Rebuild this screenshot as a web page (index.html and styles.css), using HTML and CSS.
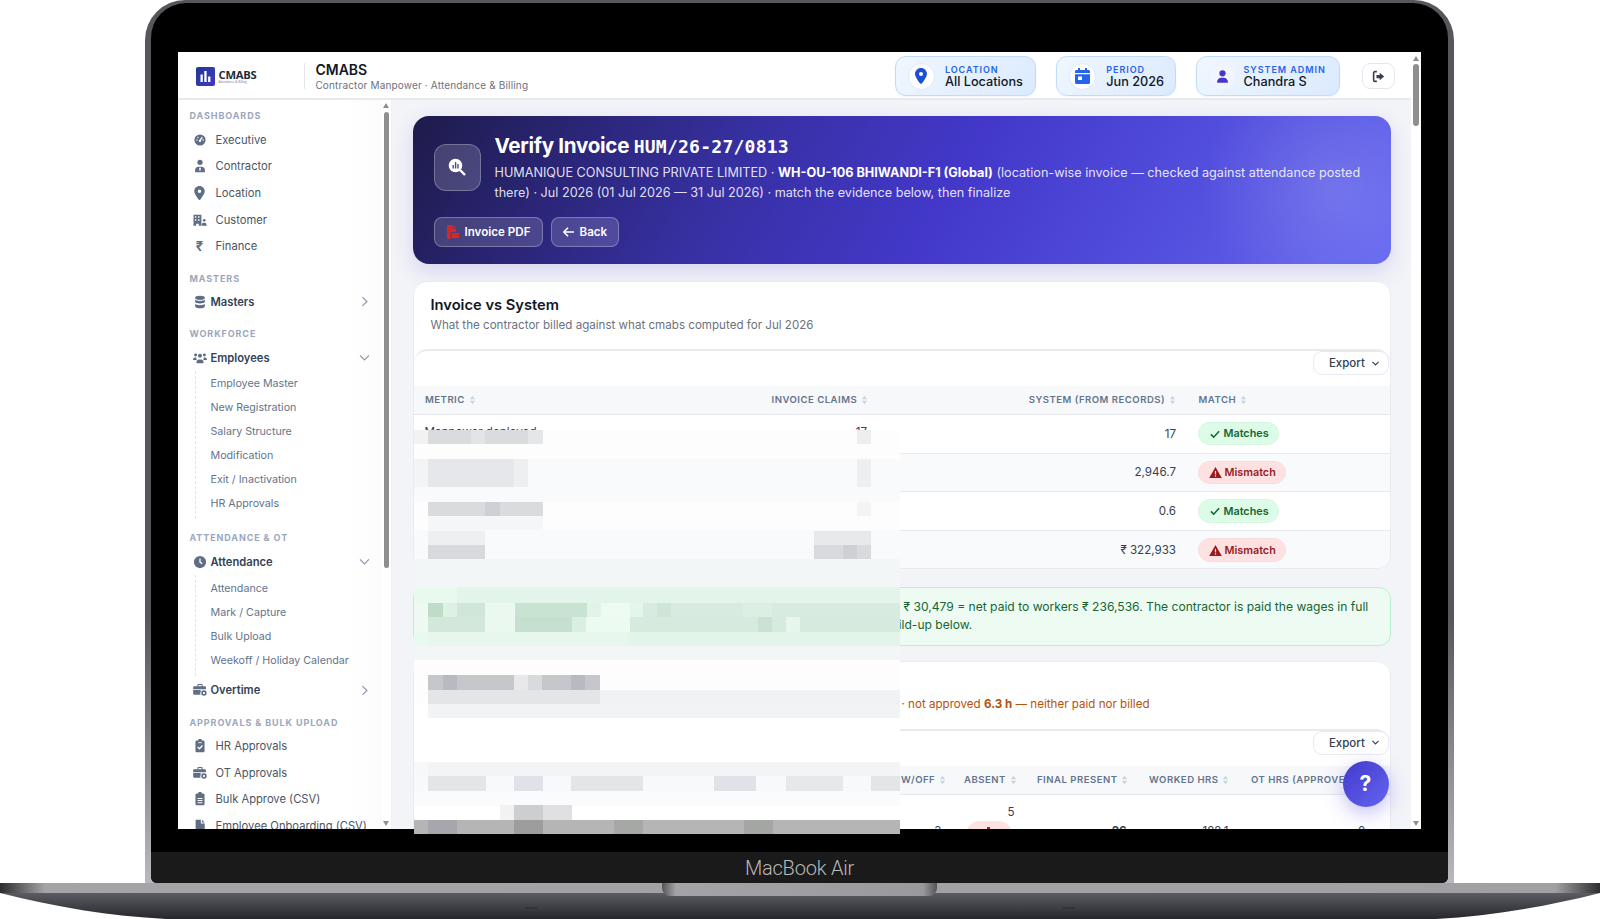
FILE: index.html
```html
<!DOCTYPE html>
<html>
<head>
	<meta charset="UTF-8">
	<title>CMABS</title>
	<link rel="stylesheet" href="styles.css">
</head>
<body>
<svg class="defs" width="0" height="0">
	<symbol id="i-gauge" viewBox="0 0 16 16"><circle cx="8" cy="8" r="6.4" fill="currentColor"/><path d="M8 8.6L10.6 4.6" stroke="#fff" stroke-width="1.5"/><circle cx="8" cy="9" r="1.3" fill="#fff"/><circle cx="4.5" cy="8" r=".8" fill="#fff"/><circle cx="5.6" cy="5" r=".8" fill="#fff"/><circle cx="11.6" cy="8" r=".8" fill="#fff"/></symbol>
	<symbol id="i-tie" viewBox="0 0 16 16"><circle cx="8" cy="3.8" r="3" fill="currentColor"/><path d="M2.4 15v-2.2a4 4 0 0 1 4-4h3.2a4 4 0 0 1 4 4V15z" fill="currentColor"/><path d="M8 9.4l1 1.2-.6 3h-.8l-.6-3z" fill="#fff"/></symbol>
	<symbol id="i-pin" viewBox="0 0 384 512"><path fill="currentColor" d="M215.7 499.2C267 435 384 279.4 384 192C384 86 298 0 192 0S0 86 0 192c0 87.4 117 243 168.3 307.2c12.3 15.3 35.1 15.3 47.4 0zM192 128a64 64 0 1 1 0 128 64 64 0 1 1 0-128z"/></symbol>
	<symbol id="i-building" viewBox="0 0 16 16"><path d="M.6 2h9v12.6h-3v-2.4h-3v2.4h-3z" fill="currentColor"/><path d="M2.2 3.8h1.6v1.6H2.2zM5.8 3.8h1.6v1.6H5.8zM2.2 7.2h1.6v1.6H2.2zM5.8 7.2h1.6v1.6H5.8z" fill="#fff"/><circle cx="12.8" cy="8.4" r="1.5" fill="currentColor"/><path d="M10 14.6v-1.2a2.2 2.2 0 0 1 2.2-2.2h1.2a2.2 2.2 0 0 1 2.2 2.2v1.2z" fill="currentColor"/></symbol>
	<symbol id="i-db" viewBox="0 0 16 16"><g fill="currentColor"><ellipse cx="8" cy="3.2" rx="5.6" ry="2.4"/><path d="M2.4 5.2C3.6 7.4 12.4 7.4 13.6 5.2V8C12.4 10.2 3.6 10.2 2.4 8z"/><path d="M2.4 10C3.6 12.2 12.4 12.2 13.6 10v2.8C13.6 14 11 15.2 8 15.2S2.4 14 2.4 12.8z"/></g></symbol>
	<symbol id="i-users" viewBox="0 0 16 16"><g fill="currentColor"><circle cx="3" cy="4.6" r="1.7"/><circle cx="13" cy="4.6" r="1.7"/><circle cx="8" cy="5.4" r="2.3"/><path d="M0 10a2.6 2.6 0 0 1 2.6-2.6H4a3 3 0 0 0 .4 3H0zM16 10a2.6 2.6 0 0 0-2.6-2.6H12a3 3 0 0 1-.4 3H16zM4 14v-1.2a3 3 0 0 1 3-3h2a3 3 0 0 1 3 3V14z"/></g></symbol>
	<symbol id="i-clock" viewBox="0 0 16 16"><circle cx="8" cy="8" r="7" fill="currentColor"/><path d="M8 4v4.2l2.6 1.7" fill="none" stroke="#fff" stroke-width="1.5"/></symbol>
	<symbol id="i-biztime" viewBox="0 0 16 16"><path d="M5 3.6V2.4C5 1.6 5.6 1 6.4 1h3.2c.8 0 1.4.6 1.4 1.4v1.2h2.4c.8 0 1.4.6 1.4 1.4v2H.2V5c0-.8.6-1.4 1.4-1.4zm1.2 0h3.6V2.2H6.2zM.2 8h8.4v1.2h1.6V8h1a4 4 0 0 0-2.600 5.400H1.600C.8 13.400.2 12.800.2 12z" fill="currentColor" fill-rule="evenodd"/><circle cx="12.500" cy="11.500" r="3.100" fill="currentColor"/><circle cx="12.500" cy="11.500" r="1.300" fill="#fff"/></symbol>
	<symbol id="i-clipcheck" viewBox="0 0 16 16"><path d="M6 1.600a2 2 0 0 1 4 0h1.600c.9 0 1.600.7 1.600 1.600v10.400c0 .9-.7 1.600-1.600 1.600H4.400c-.9 0-1.600-.7-1.600-1.600V3.200c0-.9.7-1.600 1.600-1.600z" fill="currentColor"/><path d="M5.400 9.200l2 2 3.400-3.800" fill="none" stroke="#fff" stroke-width="1.500"/><path d="M6 4.200h4" stroke="#fff" stroke-width="1"/></symbol>
	<symbol id="i-cliplist" viewBox="0 0 16 16"><path d="M6 1.600a2 2 0 0 1 4 0h1.600c.9 0 1.600.7 1.600 1.600v10.400c0 .9-.7 1.600-1.600 1.600H4.400c-.9 0-1.600-.7-1.600-1.600V3.200c0-.9.7-1.600 1.600-1.600z" fill="currentColor"/><path d="M5.200 7.400h5.600M5.200 9.800h5.600M5.200 12.200h5.600" stroke="#fff" stroke-width="1.200"/></symbol>
	<symbol id="i-file" viewBox="0 0 16 16"><path d="M3 .8h6v4.400h4.400V15.200H3z" fill="currentColor"/><path d="M10.200.8l3.200 3.200h-3.200z" fill="currentColor"/></symbol>
	<symbol id="i-right" viewBox="0 0 16 16"><path d="M5.500 2.500L11 8l-5.500 5.500" fill="none" stroke="currentColor" stroke-width="1.400"/></symbol>
	<symbol id="i-down" viewBox="0 0 16 16"><path d="M2.500 5.500L8 11l5.500-5.500" fill="none" stroke="currentColor" stroke-width="1.400"/></symbol>
	<symbol id="i-down2" viewBox="0 0 16 16"><path d="M2.500 5L8 10.500 13.500 5" fill="none" stroke="currentColor" stroke-width="2"/></symbol>
	<symbol id="i-sort" viewBox="0 0 8 12"><path d="M4 .8L7.200 5H.8zM4 11.200L.8 7h6.400z" fill="currentColor"/></symbol>
	<symbol id="i-check" viewBox="0 0 16 16"><path d="M2.500 8.500l3.700 3.700 7.300-8" fill="none" stroke="currentColor" stroke-width="2"/></symbol>
	<symbol id="i-warn" viewBox="0 0 16 16"><path d="M8 1.200L15.800 14.800H.2z" fill="currentColor"/><path d="M8 6v4.400" stroke="#fee2e2" stroke-width="1.500"/><circle cx="8" cy="12.300" r=".9" fill="#fee2e2"/></symbol>
</svg>

<div class="laptop">
	<div class="bezel">
		<div class="screen">
			<div class="app">
				<header class="topbar">
					<div class="logo">
						<span class="logo-mark">
							<svg width="11" height="11" viewBox="0 0 11 11"><path d="M.5 3.500h2.300V11H.5zM4.300 0h2.300v11H4.300zM8.100 5.500h2.300V11H8.100z" fill="#fff"/></svg>
						</span>
						<span class="logo-text">CMABS<small>Attendance &amp; Billing</small></span>
					</div>
					<div class="brand">
						<div class="brand-name">CMABS</div>
						<div class="brand-sub">Contractor Manpower · Attendance &amp; Billing</div>
					</div>
					<div class="pill pill-loc">
						<span class="pill-ico"><svg class="blue" width="12" height="16"><use href="#i-pin"/></svg></span>
						<span class="pill-txt"><b>LOCATION</b>All Locations</span>
					</div>
					<div class="pill pill-per">
						<span class="pill-ico">
							<svg width="15" height="16" viewBox="0 0 15 16"><path d="M3 0h2v2h5V0h2v2h1.500C14.300 2 15 2.700 15 3.500V5H0V3.500C0 2.700.7 2 1.500 2H3zM0 6.200h15v8.300c0 .8-.7 1.500-1.500 1.500h-12C.7 16 0 15.300 0 14.500z" fill="#2563eb"/><path d="M3 8.500h4v3.500H3z" fill="#fff"/></svg>
						</span>
						<span class="pill-txt"><b>PERIOD</b>Jun 2026</span>
					</div>
					<div class="pill pill-adm">
						<span class="pill-ico"><svg width="11" height="13" viewBox="0 0 448 512"><path fill="#4338ca" d="M224 256A128 128 0 1 0 224 0a128 128 0 1 0 0 256zm-45.700 48C79.800 304 0 383.800 0 482.300C0 498.700 13.300 512 29.700 512H418.300c16.400 0 29.700-13.300 29.700-29.700C448 383.800 368.200 304 269.700 304H178.300z"/></svg></span>
						<span class="pill-txt"><b>SYSTEM ADMIN</b>Chandra S</span>
					</div>
					<div class="logout">
						<svg width="13" height="13" viewBox="0 0 16 16"><path d="M6 2H3.500C2.700 2 2 2.700 2 3.500v9c0 .8.7 1.500 1.500 1.500H6" fill="none" stroke="#374151" stroke-width="2"/><path d="M9.500 3.500L15 8l-5.500 4.500V10H5.500V6h4z" fill="#374151"/></svg>
					</div>
				</header>
				<div class="body">
					<aside class="side">
						<nav class="nav">
							<div class="nav-label">DASHBOARDS</div>
							<a class="nav-item"><svg class="ico"><use href="#i-gauge"/></svg>Executive</a>
							<a class="nav-item"><svg class="ico"><use href="#i-tie"/></svg>Contractor</a>
							<a class="nav-item"><svg class="ico ico-pin"><use href="#i-pin"/></svg>Location</a>
							<a class="nav-item"><svg class="ico"><use href="#i-building"/></svg>Customer</a>
							<a class="nav-item"><span class="ico ico-rs">₹</span>Finance</a>

							<div class="nav-label">MASTERS</div>
							<a class="nav-group"><svg class="ico"><use href="#i-db"/></svg>Masters<svg class="chev"><use href="#i-right"/></svg></a>

							<div class="nav-label">WORKFORCE</div>
							<a class="nav-group"><svg class="ico"><use href="#i-users"/></svg>Employees<svg class="chev"><use href="#i-down"/></svg></a>
							<div class="sub">
								<a>Employee Master</a>
								<a>New Registration</a>
								<a>Salary Structure</a>
								<a>Modification</a>
								<a>Exit / Inactivation</a>
								<a>HR Approvals</a>
							</div>

							<div class="nav-label">ATTENDANCE &amp; OT</div>
							<a class="nav-group"><svg class="ico"><use href="#i-clock"/></svg>Attendance<svg class="chev"><use href="#i-down"/></svg></a>
							<div class="sub">
								<a>Attendance</a>
								<a>Mark / Capture</a>
								<a>Bulk Upload</a>
								<a>Weekoff / Holiday Calendar</a>
							</div>
							<a class="nav-group nav-ot"><svg class="ico"><use href="#i-biztime"/></svg>Overtime<svg class="chev"><use href="#i-right"/></svg></a>

							<div class="nav-label">APPROVALS &amp; BULK UPLOAD</div>
							<a class="nav-item"><svg class="ico"><use href="#i-clipcheck"/></svg>HR Approvals</a>
							<a class="nav-item"><svg class="ico"><use href="#i-biztime"/></svg>OT Approvals</a>
							<a class="nav-item"><svg class="ico"><use href="#i-cliplist"/></svg>Bulk Approve (CSV)</a>
							<a class="nav-item"><svg class="ico"><use href="#i-file"/></svg>Employee Onboarding (CSV)</a>
						</nav>
						<div class="sbar sbar-side"><i class="up"></i><span class="thumb"></span><i class="dn"></i></div>
					</aside>

					<main class="main">
						<section class="hero">
							<div class="hero-top">
								<span class="hero-ico">
									<svg width="18" height="18" viewBox="0 0 18 18"><circle cx="7.500" cy="7.500" r="6.800" fill="#fff"/><path d="M4.500 7h1.400v3.500H4.500zM6.900 4h1.400v6.500H6.900zM9.300 6h1.400v4.500H9.300z" fill="#4f4a8c"/><path d="M12 12l5 5" stroke="#fff" stroke-width="2.400"/></svg>
								</span>
								<div class="hero-txt">
									<h1>Verify Invoice <code>HUM/26-27/0813</code></h1>
									<p>HUMANIQUE CONSULTING PRIVATE LIMITED · <b>WH-OU-106 BHIWANDI-F1 (Global)</b> (location-wise invoice — checked against attendance posted there) · Jul 2026 (01 Jul 2026 — 31 Jul 2026) · match the evidence below, then finalize</p>
								</div>
							</div>
							<div class="hero-btns">
								<a class="hbtn">
									<svg width="13" height="14" viewBox="0 0 13 14"><path d="M1 0h5.500v3.500H10V7H4.500v7H1z" fill="#dc2626"/><path d="M7.300 0L10 2.700H7.300zM5.500 8H13v5H5.500z" fill="#dc2626"/></svg>
									Invoice PDF
								</a>
								<a class="hbtn">
									<svg width="11" height="10" viewBox="0 0 11 10"><path d="M5 .8L.9 5 5 9.200M1 5h10" fill="none" stroke="#fff" stroke-width="1.600"/></svg>
									Back
								</a>
							</div>
						</section>

						<section class="card">
							<div class="card-head">
								<h2>Invoice vs System</h2>
								<p>What the contractor billed against what cmabs computed for Jul 2026</p>
							</div>
							<div class="twrap">
								<div class="tbar"><a class="export">Export<svg width="9" height="9"><use href="#i-down2"/></svg></a></div>
								<table class="tbl tbl-a">
									<thead>
										<tr>
											<th class="left">METRIC <svg class="sort"><use href="#i-sort"/></svg></th>
											<th>INVOICE CLAIMS <svg class="sort"><use href="#i-sort"/></svg></th>
											<th>SYSTEM (FROM RECORDS) <svg class="sort"><use href="#i-sort"/></svg></th>
											<th class="left">MATCH <svg class="sort"><use href="#i-sort"/></svg></th>
										</tr>
									</thead>
									<tbody>
										<tr><td class="left first">Manpower deployed</td><td class="first">17</td><td>17</td><td class="left"><span class="badge ok"><svg width="12" height="12"><use href="#i-check"/></svg>Matches</span></td></tr>
										<tr><td></td><td></td><td>2,946.7</td><td class="left"><span class="badge bad"><svg width="13" height="13"><use href="#i-warn"/></svg>Mismatch</span></td></tr>
										<tr><td></td><td></td><td>0.6</td><td class="left"><span class="badge ok"><svg width="12" height="12"><use href="#i-check"/></svg>Matches</span></td></tr>
										<tr><td></td><td></td><td>₹ 322,933</td><td class="left"><span class="badge bad"><svg width="13" height="13"><use href="#i-warn"/></svg>Mismatch</span></td></tr>
									</tbody>
								</table>
							</div>
						</section>

						<div class="note">
							<div class="note-a">₹ 30,479 = net paid to workers ₹ 236,536. The contractor is paid the wages in full</div>
							<div class="note-b">build-up below.</div>
						</div>

						<section class="card card-b">
							<div class="card-head head-b">
								<p class="warn">· not approved <b>6.3 h</b> — neither paid nor billed</p>
							</div>
							<div class="twrap">
								<div class="tbar"><a class="export">Export<svg width="9" height="9"><use href="#i-down2"/></svg></a></div>
								<table class="tbl tbl-b">
									<thead>
										<tr>
											<th></th>
											<th>W/OFF <svg class="sort"><use href="#i-sort"/></svg></th>
											<th>ABSENT <svg class="sort"><use href="#i-sort"/></svg></th>
											<th>FINAL PRESENT <svg class="sort"><use href="#i-sort"/></svg></th>
											<th>WORKED HRS <svg class="sort"><use href="#i-sort"/></svg></th>
											<th class="left">OT HRS (APPROVED)</th>
										</tr>
									</thead>
									<tbody>
										<tr>
											<td></td>
											<td>3</td>
											<td class="absent">5<span class="dot"><i></i></span></td>
											<td><b>26</b></td>
											<td>182.1</td>
											<td class="ot">0</td>
										</tr>
									</tbody>
								</table>
							</div>
						</section>
					</main>
				</div>
			</div>
			<div class="sbar sbar-main"><i class="up"></i><span class="thumb"></span><i class="dn"></i></div>
		</div>
		<div class="chin">MacBook Air</div>
	</div>
</div>
<div class="base">
	<span class="base-dot dot-l"></span>
	<span class="base-dot dot-r"></span>
	<span class="notch"></span>
</div>

<a class="fab">?</a>

<!-- pixelated blur block laid over the middle of the page -->
<svg class="mosaic" width="486" height="404" viewBox="0 0 486 404">
	<rect width="486" height="29" fill="#fdfdfe"/>
	<rect y="29" width="486" height="14" fill="#f9fafb"/>
	<rect y="43" width="486" height="29" fill="#f9fafb"/>
	<rect y="72" width="486" height="29" fill="#fdfdfe"/>
	<rect y="86" width="486" height="14" fill="#fdfdfe"/>
	<rect y="100" width="486" height="36" fill="#f9fafb"/>
	<rect y="129" width="486" height="28" fill="#f3f6f7"/>
	<rect y="157" width="486" height="59" fill="#e8f9ee"/>
	<rect y="216" width="486" height="15" fill="#f2f6f7"/>
	<rect y="230" width="486" height="90" fill="#fdfdfe"/>
	<rect y="274" width="486" height="58" fill="#ffffff"/>
	<rect y="332" width="486" height="15" fill="#f7f8f9"/>
	<rect y="346" width="486" height="15" fill="#f8f9fb"/>
	<rect y="361" width="486" height="15" fill="#fafbfc"/>
	<rect y="376" width="486" height="14" fill="#ffffff"/>

	<!-- table rows -->
	<rect y="0" width="14" height="14" fill="#f2f2f3"/>
	<rect x="14" y="0" width="115" height="14" fill="#dadbde"/>
	<rect x="57" y="0" width="14" height="14" fill="#e3e4e7"/>
	<rect x="114" y="0" width="15" height="14" fill="#e5e6e8"/>
	<rect x="443" y="0" width="14" height="14" fill="#eceef0"/>
	<rect x="14" y="29" width="100" height="28" fill="#e6e7ea"/>
	<rect x="100" y="29" width="14" height="28" fill="#eeeff1"/>
	<rect x="0" y="29" width="14" height="28" fill="#f3f4f5"/>
	<rect x="443" y="29" width="14" height="28" fill="#eeeff1"/>
	<rect x="14" y="72" width="115" height="14" fill="#dadbde"/>
	<rect x="71" y="72" width="15" height="14" fill="#cfd0d5"/>
	<rect x="14" y="86" width="115" height="14" fill="#f5f6f7"/>
	<rect x="443" y="72" width="14" height="14" fill="#f4f4f5"/>
	<rect x="14" y="101" width="57" height="14" fill="#eeeff1"/>
	<rect x="14" y="115" width="57" height="14" fill="#d8d9dd"/>
	<rect x="400" y="101" width="57" height="14" fill="#e8e9eb"/>
	<rect x="400" y="115" width="57" height="14" fill="#d9dadd"/>
	<rect x="429" y="115" width="14" height="14" fill="#cfd0d5"/>

	<!-- green note -->
	<rect x="43" y="157" width="443" height="16" fill="#e3f5ea"/>
	<rect y="173" width="14" height="29" fill="#eef9f2"/>
	<rect x="14" y="173" width="15" height="14" fill="#bfdcc9"/>
	<rect x="29" y="173" width="14" height="14" fill="#dff0e5"/>
	<rect x="43" y="173" width="28" height="14" fill="#d0e6d8"/>
	<rect x="71" y="173" width="30" height="14" fill="#eaf8ef"/>
	<rect x="101" y="173" width="72" height="14" fill="#c9e3d2"/>
	<rect x="173" y="173" width="14" height="14" fill="#e2f3e8"/>
	<rect x="187" y="173" width="29" height="14" fill="#eefbf2"/>
	<rect x="229" y="173" width="257" height="14" fill="#d8ebe0"/>
	<rect x="216" y="173" width="13" height="14" fill="#e4f5ea"/>
	<rect x="243" y="173" width="14" height="14" fill="#cfe5d7"/>
	<rect x="329" y="173" width="29" height="14" fill="#dcefe3"/>
	<rect x="14" y="187" width="57" height="15" fill="#d3e8db"/>
	<rect x="71" y="187" width="30" height="15" fill="#eaf8ef"/>
	<rect x="101" y="187" width="57" height="15" fill="#c6e0cf"/>
	<rect x="158" y="187" width="14" height="15" fill="#daeee1"/>
	<rect x="172" y="187" width="44" height="15" fill="#ecfaf1"/>
	<rect x="216" y="187" width="270" height="15" fill="#d7eade"/>
	<rect x="344" y="187" width="14" height="15" fill="#cbe2d3"/>
	<rect x="372" y="187" width="14" height="15" fill="#e6f6ec"/>
	<rect x="14" y="202" width="200" height="14" fill="#e7f7ec"/>
	<rect x="214" y="202" width="272" height="14" fill="#e3f4e9"/>

	<!-- second card -->
	<rect x="14" y="245" width="172" height="15" fill="#c6c7cb"/>
	<rect x="29" y="245" width="14" height="15" fill="#b9babf"/>
	<rect x="100" y="245" width="14" height="15" fill="#e8e8ea"/>
	<rect x="114" y="245" width="14" height="15" fill="#d9dadd"/>
	<rect x="157" y="245" width="14" height="15" fill="#b9babf"/>
	<rect x="14" y="260" width="172" height="14" fill="#e4e5e7"/>
	<rect x="186" y="260" width="300" height="14" fill="#f1f2f3"/>
	<rect x="14" y="274" width="472" height="14" fill="#f2f3f4"/>
	<rect x="14" y="332" width="472" height="14" fill="#f3f4f6"/>
	<rect x="14" y="346" width="58" height="15" fill="#e3e5e9"/>
	<rect x="100" y="346" width="29" height="15" fill="#e0e2e7"/>
	<rect x="157" y="346" width="72" height="15" fill="#e3e5e9"/>
	<rect x="300" y="346" width="42" height="15" fill="#e0e2e7"/>
	<rect x="372" y="346" width="57" height="15" fill="#e6e8eb"/>
	<rect x="457" y="346" width="29" height="15" fill="#e3e5e9"/>
	<rect x="86" y="375" width="14" height="15" fill="#f2f2f2"/>
	<rect x="100" y="375" width="29" height="15" fill="#cdced0"/>
	<rect x="129" y="375" width="29" height="15" fill="#e0e0e2"/>

	<!-- bottom strip runs over the bezel -->
	<rect y="390" width="486" height="14" fill="#b5b5b5"/>
	<rect x="14" y="390" width="29" height="14" fill="#a8a6ad"/>
	<rect x="100" y="390" width="29" height="14" fill="#9d9d9e"/>
	<rect x="200" y="390" width="29" height="14" fill="#a6a8a6"/>
	<rect x="330" y="390" width="29" height="14" fill="#a4a6a4"/>
</svg>
</body>
</html>
```

FILE: styles.css
```css
*{
	box-sizing: border-box;
}
html,body{
	margin: 0;
	padding: 0;
	height: 919px;
	overflow: hidden;
	background: #fff;
}
body{
	position: relative;
	font-family: "Inter", "Noto Sans", sans-serif;
	color: #1f2937;
}
.defs{
	position: absolute;
}
b{
	font-weight: 700;
}

/* laptop */
.laptop{
	width: 1309px;
	height: 883px;
	margin-left: 145px;
	padding: 3px 6px 0;
	border-radius: 40px 40px 0 0;
	background: linear-gradient(#56575b 0, #56575b 70%, #b9b9bd 100%);
}
.bezel{
	height: 880px;
	padding: 49px 27.5px 0 26.5px;
	border-radius: 35px 35px 6px 6px;
	background: #000;
	display: flex;
	flex-direction: column;
}
.screen{
	height: 776.5px;
	display: flex;
	background: #fff;
	overflow: hidden;
}
.chin{
	height: 31px;
	margin: 23.5px -27.5px 0 -26.5px;
	border-radius: 0 0 6px 6px;
	background: #1a1a1a;
	color: #b9b9b9;
	font-family: "Roboto", sans-serif;
	font-weight: 300;
	font-size: 20px;
	line-height: 32px;
	letter-spacing: -.2px;
	text-align: center;
}
.base{
	position: relative;
	height: 36px;
	background:
		linear-gradient(90deg, #2d2d30 0, #a3a3a8 45px, #a1a1a5 1555px, #2d2d30 100%) top/100% 10px no-repeat,
		linear-gradient(#5b5c61 28%, #26272c);
	clip-path: path("M0 0H1600V10C1545 24 1490 33 1436 36H166C110 33 55 24 0 10Z");
}
.notch{
	position: absolute;
	left: 662px;
	top: 0;
	width: 275px;
	height: 13px;
	border-radius: 0 0 8px 8px;
	background: linear-gradient(90deg, #55565a, #a4a4a8 14px, #9a9a9e 261px, #55565a);
}
.base-dot{
	position: absolute;
	top: 24px;
	width: 12px;
	height: 2px;
	border-radius: 2px;
	background: #313236;
}
.dot-l{
	left: 525px;
}
.dot-r{
	left: 1063px;
}

/* app */
.app{
	flex: 1;
	min-width: 0;
	display: flex;
	flex-direction: column;
}
.topbar{
	height: 47.5px;
	flex: none;
	display: flex;
	align-items: center;
	border-bottom: 2px solid #e8eaf0;
	padding: 2.5px 16.5px 0 0;
}
.logo{
	width: 127.5px;
	height: 26px;
	padding-left: 18px;
	display: flex;
	align-items: center;
	gap: 4px;
	border-right: 1px solid #e5e7eb;
}
.logo-mark{
	width: 19px;
	height: 19px;
	border-radius: 2px;
	background: linear-gradient(135deg, #1e3a8a, #4338ca);
	display: flex;
	align-items: center;
	justify-content: center;
}
.logo-text{
	font-family: "Open Sans", sans-serif;
	font-weight: 700;
	font-size: 11.2px;
	line-height: 11px;
	color: #1f2937;
	letter-spacing: -.2px;
}
.logo-text small{
	display: block;
	font-size: 3px;
	line-height: 4px;
	font-weight: 400;
	color: #6b6fa8;
	letter-spacing: 0;
}
.brand{
	margin-left: 10.5px;
	width: 580px;
}
.brand-name{
	font-size: 14px;
	font-weight: 600;
	line-height: 17px;
	color: #111827;
}
.brand-sub{
	font-size: 10px;
	line-height: 14px;
	color: #6b7280;
	letter-spacing: .16px;
}
.pill{
	height: 39.5px;
	flex: none;
	display: flex;
	align-items: center;
	border: 1px solid #bfdbfe;
	border-radius: 11px;
	background: linear-gradient(135deg, #f0f7ff, #dbeafe);
	box-shadow: 0 1px 2px rgba(37,99,235,.08);
}
.pill-loc{
	width: 141.5px;
	margin-left: auto;
}
.pill-per{
	width: 120px;
	margin-left: 19.8px;
}
.pill-adm{
	width: 144px;
	margin-left: 19.8px;
}
.pill-ico{
	width: 27px;
	height: 27px;
	flex: none;
	margin-left: 12px;
	border-radius: 50%;
	background: #fff;
	border: 1px solid #dbeafe;
	display: flex;
	align-items: center;
	justify-content: center;
}
.pill-adm .pill-ico{
	background: #f1f5ff;
	border-color: #eef2ff;
}
.pill-txt{
	margin-left: 10px;
	font-size: 12.7px;
	font-weight: 500;
	line-height: 14px;
	color: #111827;
	white-space: nowrap;
}
.pill-adm .pill-txt{
	margin-left: 7.5px;
}
.pill-txt b{
	display: block;
	font-size: 9px;
	line-height: 11px;
	font-weight: 600;
	letter-spacing: .95px;
	color: #2563eb;
}
.blue{
	color: #1d4ed8;
}
.logout{
	width: 32.5px;
	height: 26px;
	margin-left: 22px;
	border: 1px solid #e5e7eb;
	border-radius: 8px;
	display: flex;
	align-items: center;
	justify-content: center;
}
.body{
	flex: 1;
	min-height: 0;
	display: flex;
}

/* sidebar */
.side{
	width: 214px;
	flex: none;
	display: flex;
	background: linear-gradient(90deg, #fff 80%, #fbfbfd);
	border-right: 1px solid #eef0f4;
	overflow: hidden;
}
.nav{
	width: 204px;
	flex: none;
	padding-top: 6.8px;
}
.nav-label{
	height: 20px;
	line-height: 20px;
	margin-top: 9px;
	padding-left: 12px;
	font-size: 9px;
	font-weight: 700;
	letter-spacing: .9px;
	color: #9ba7bd;
	white-space: nowrap;
}
.nav-label:first-child{
	margin-top: 0;
}
.nav-item,.nav-group{
	height: 26.67px;
	display: flex;
	align-items: center;
	padding-left: 15px;
	font-size: 11.2px;
	color: #4b5563;
	white-space: nowrap;
}
.nav-group{
	font-weight: 600;
	color: #334155;
}
.nav-ot{
	margin-top: 1.6px;
}
.ico{
	width: 14px;
	height: 14px;
	flex: none;
	margin-right: 9px;
	color: #5f6e85;
}
.nav-group .ico{
	margin-right: 4px;
}
.ico-pin{
	width: 11px;
}
.nav-item .ico-pin{
	margin-left: 1.5px;
	margin-right: 10.5px;
}
.ico-rs{
	font-size: 13px;
	font-weight: 700;
	line-height: 14px;
	text-align: center;
}
.chev{
	width: 13px;
	height: 13px;
	margin-left: auto;
	margin-right: 11px;
	color: #8a94a6;
}
.sub{
	margin-left: 17.5px;
	padding: 1.5px 0 3px 14.5px;
	border-left: 1px dashed #dfe3ea;
}
.sub a{
	display: block;
	height: 24px;
	line-height: 24px;
	font-size: 10.7px;
	color: #64748b;
	white-space: nowrap;
}

/* scrollbars */
.sbar{
	width: 9.5px;
	flex: none;
	display: flex;
	flex-direction: column;
	align-items: center;
	background: #fff;
}
.sbar .thumb{
	width: 5.5px;
	border-radius: 3px;
	background: #8f8f8f;
}
.sbar i{
	width: 0;
	height: 0;
	border-left: 3.5px solid transparent;
	border-right: 3.5px solid transparent;
}
.sbar .up{
	margin-top: 3.5px;
	border-bottom: 5px solid #8f8f8f;
}
.sbar .dn{
	margin-top: auto;
	margin-bottom: 2.5px;
	border-top: 5px solid #8f8f8f;
}
.sbar-side .thumb{
	height: 456px;
	margin-top: 3.5px;
}
.sbar-main .thumb{
	height: 62px;
	margin-top: 3px;
}

/* main */
.main{
	flex: 1;
	min-width: 0;
	padding: 16.2px 19.6px 0 21px;
	background: #f3f4f8;
	overflow: hidden;
}
.hero{
	height: 148.6px;
	padding: 16.5px 21px 0;
	border-radius: 16px;
	color: #fff;
	background:
		radial-gradient(circle at 94% 50%, rgba(255,255,255,.14), rgba(255,255,255,0) 130px),
		linear-gradient(120deg, #1e1b4b 0, #3730a3 33%, #4338ca 55%, #6366f1 100%);
	box-shadow: 0 8px 22px rgba(67,56,202,.16);
}
.hero-top{
	display: flex;
	height: 84.5px;
}
.hero-ico{
	width: 47px;
	height: 47px;
	margin-top: 11.5px;
	flex: none;
	border: 1px solid rgba(255,255,255,.25);
	border-radius: 12px;
	background: rgba(255,255,255,.17);
	display: flex;
	align-items: center;
	justify-content: center;
}
.hero-txt{
	margin-left: 14px;
}
.hero h1{
	margin: 0;
	height: 28px;
	font-size: 20.6px;
	font-weight: 700;
	line-height: 28px;
	letter-spacing: -.3px;
}
.hero code{
	font-family: "DejaVu Sans Mono", monospace;
	font-size: 18px;
	font-weight: 700;
	letter-spacing: .25px;
}
.hero p{
	margin: 2.5px 0 0;
	font-size: 12.65px;
	line-height: 20px;
	color: rgba(255,255,255,.87);
}
.hero p b{
	font-weight: 700;
	color: #fff;
}
.hero-btns{
	display: flex;
	gap: 8px;
}
.hbtn{
	height: 30px;
	padding: 0 11px 0 11px;
	display: flex;
	align-items: center;
	gap: 6px;
	border: 1px solid rgba(255,255,255,.28);
	border-radius: 8px;
	background: rgba(255,255,255,.15);
	font-size: 11.6px;
	font-weight: 600;
	color: #fff;
}

/* cards and tables */
.card{
	height: 288px;
	margin-top: 16.6px;
	border: 1px solid #e9ebf1;
	border-radius: 14px;
	background: #fff;
	overflow: hidden;
}
.card-head{
	height: 67px;
	padding: 13px 17px 0;
}
.card-head h2{
	margin: 0;
	font-size: 14.7px;
	font-weight: 600;
	line-height: 20px;
	color: #111827;
}
.card-head p{
	margin: 2px 0 0;
	font-size: 11.6px;
	line-height: 16px;
	color: #6b7280;
}
.twrap{
	border-top: 2px solid #e8eaf0;
	border-radius: 14px 14px 0 0;
	height: 220px;
}
.tbar{
	height: 35px;
	padding: 0 1px 0 0;
	display: flex;
	justify-content: flex-end;
}
.export{
	width: 76.5px;
	height: 24.5px;
	padding-left: 15px;
	display: flex;
	align-items: center;
	gap: 6px;
	border: 1px solid #e8eaf0;
	border-radius: 9px;
	background: #fff;
	font-size: 11.5px;
	font-weight: 500;
	color: #374151;
}
.export svg{
	color: #374151;
}
.tbl{
	width: 100%;
	table-layout: fixed;
	border-collapse: collapse;
}
.tbl th{
	height: 28.5px;
	padding: 0 11px 0 11.5px;
	background: #f7f8fa;
	border-bottom: 1.5px solid #e5e7eb;
	font-size: 9.55px;
	font-weight: 600;
	letter-spacing: .5px;
	color: #64748b;
	text-align: right;
	white-space: nowrap;
}
.tbl td{
	height: 38.7px;
	padding: 0 11px;
	font-size: 11.6px;
	color: #374151;
	text-align: right;
	border-bottom: 1px solid #e8eaf0;
}
.tbl .left{
	text-align: left;
}
.tbl-a tbody tr:nth-child(even) td{
	background: #f9fafc;
}
.tbl-a tbody tr:last-child td{
	border-bottom: 0;
}
.tbl-a th:nth-child(1){
	width: 346.500px;
}
.tbl-a th:nth-child(2){
	width: 118px;
}
.tbl-a th:nth-child(3){
	width: 309px;
}
.sort{
	width: 7px;
	height: 10px;
	vertical-align: -1.5px;
	margin-left: 1px;
	color: #cbd5e1;
}
.first{
	vertical-align: top;
	padding-top: 9px !important;
	line-height: 16px;
}
.badge{
	display: inline-flex;
	align-items: center;
	gap: 3px;
	height: 23.4px;
	padding: 0 9.5px;
	border-radius: 12px;
	font-size: 10.8px;
	font-weight: 600;
}
.ok{
	background: #dcfce7;
	border: 1px solid #d5f5e1;
	color: #166534;
}
.bad{
	background: #fee2e2;
	border: 1px solid #fbdcdc;
	color: #991b1b;
}
.note{
	height: 59px;
	margin-top: 17.700px;
	padding-top: 10px;
	border: 1px solid #bbf0cf;
	border-radius: 12px;
	background: #eefbf3;
	font-size: 12.1px;
	line-height: 18.500px;
	color: #166534;
}
.note-a{
	padding-left: 490px;
	white-space: nowrap;
}
.note-b{
	padding-left: 470.5px;
	white-space: nowrap;
}
.card-b{
	height: 300px;
	margin-top: 15px;
}
.head-b{
	padding-top: 34px;
}
.card-head .warn{
	margin: 0 0 0 471px;
	font-size: 11.6px;
	color: #b45309;
}
.tbl-b th:nth-child(1){
	width: 476px;
}
.tbl-b th:nth-child(2){
	width: 63px;
}
.tbl-b th:nth-child(3){
	width: 73px;
}
.tbl-b th:nth-child(4){
	width: 112px;
}
.tbl-b th:nth-child(5){
	width: 102px;
}
.tbl-b td{
	height: 74px;
	border: 0;
}
.tbl-b td.absent{
	line-height: 16px;
	vertical-align: top;
	padding-top: 9px;
}
.dot{
	display: block;
	width: 46px;
	height: 28px;
	margin: 1px 3px 0 auto;
	padding-top: 6px;
	border-radius: 14px;
	background: #fee2e2;
}
.dot i{
	display: block;
	width: 3px;
	height: 8px;
	margin: 0 auto;
	background: #b91c1c;
}
.ot{
	padding-right: 25px !important;
}

/* over the content */
.fab{
	position: absolute;
	left: 1342.500px;
	top: 760.700px;
	width: 46px;
	height: 46px;
	border-radius: 50%;
	background: linear-gradient(135deg, #4338ca, #6366f1);
	box-shadow: 0 6px 20px rgba(79,70,229,.35);
	color: #fff;
	font-size: 21px;
	font-weight: 700;
	line-height: 46px;
	text-align: center;
}
.mosaic{
	position: absolute;
	left: 414px;
	top: 430px;
	filter: blur(.6px);
}
```
